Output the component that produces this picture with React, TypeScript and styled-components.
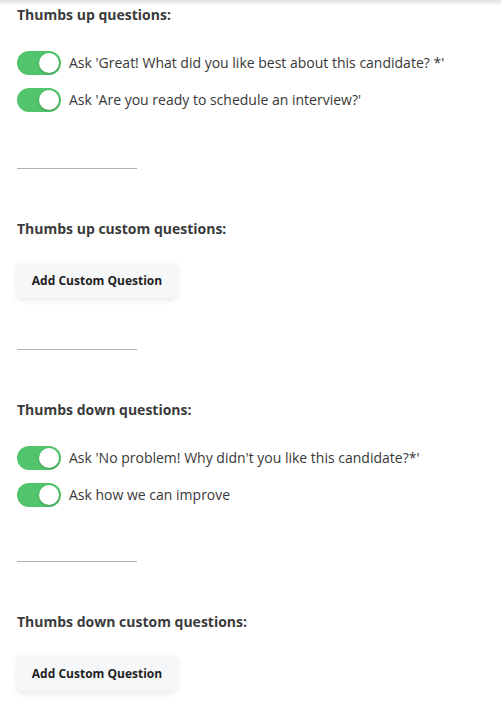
import styled, { createGlobalStyle } from 'styled-components';

const GlobalStyle = createGlobalStyle`
  html, body {
    margin: 0;
    padding: 0;
    background: #ffffff;
  }

  body {
    font-family: 'Open Sans', 'Liberation Sans', sans-serif;
    color: #333333;
  }
`;

const Page = styled.div`
  position: relative;
  min-height: 708px;
  padding: 0 17px;
  box-sizing: border-box;

  &::before {
    content: '';
    position: absolute;
    top: 0;
    left: 0;
    right: 0;
    height: 6px;
    background: linear-gradient(rgba(0, 0, 0, 0.12), rgba(0, 0, 0, 0));
  }
`;

const Section = styled.section`
  display: flex;
  flex-direction: column;
`;

const Heading = styled.h3<{ $top: number }>`
  margin: ${(props) => props.$top}px 0 0;
  font-size: 14px;
  font-weight: 700;
  line-height: 20px;
  color: #3b3b3b;
`;

const ToggleList = styled.div`
  display: flex;
  flex-direction: column;
  gap: 13px;
  margin-top: 26px;
`;

const ToggleRow = styled.label`
  display: flex;
  align-items: center;
  gap: 8px;
  font-size: 14px;
  line-height: 24px;
  color: #383838;
  cursor: pointer;
`;

const Track = styled.span<{ $on: boolean }>`
  position: relative;
  width: 44px;
  height: 24px;
  border-radius: 12px;
  flex-shrink: 0;
  background: ${(props) => (props.$on ? '#52c46b' : '#cfd3d8')};
`;

const Knob = styled.span<{ $on: boolean }>`
  position: absolute;
  top: 2px;
  left: ${(props) => (props.$on ? '22px' : '2px')};
  width: 20px;
  height: 20px;
  border-radius: 50%;
  background: #ffffff;
  box-shadow: 0 1px 2px rgba(0, 0, 0, 0.25);
`;

const Divider = styled.hr<{ $top: number }>`
  width: 120px;
  margin: ${(props) => props.$top}px 0 0;
  border: none;
  border-top: 1px solid #b3b3b3;
`;

const AddButton = styled.button`
  align-self: flex-start;
  width: 160px;
  height: 35px;
  margin-top: 24px;
  border: none;
  border-radius: 5px;
  background: #f6f7f9;
  box-shadow: 0 2px 6px rgba(0, 0, 0, 0.1);
  font-family: 'Open Sans', 'Liberation Sans', sans-serif;
  font-size: 12px;
  font-weight: 700;
  color: #1f1f1f;
  cursor: pointer;
`;

function Toggle({ label }: { label: string }) {
  return (
    <ToggleRow>
      <Track $on>
        <Knob $on />
      </Track>
      {label}
    </ToggleRow>
  );
}

export default function App() {
  return (
    <>
      <GlobalStyle />
      <Page>
        <Section>
          <Heading $top={5}>Thumbs up questions:</Heading>
          <ToggleList>
            <Toggle label="Ask 'Great! What did you like best about this candidate? *'" />
            <Toggle label="Ask 'Are you ready to schedule an interview?'" />
          </ToggleList>
          <Divider $top={56} />
        </Section>

        <Section>
          <Heading $top={50}>Thumbs up custom questions:</Heading>
          <AddButton>Add Custom Question</AddButton>
          <Divider $top={51} />
        </Section>

        <Section>
          <Heading $top={50}>Thumbs down questions:</Heading>
          <ToggleList>
            <Toggle label="Ask 'No problem! Why didn't you like this candidate?*'" />
            <Toggle label="Ask how we can improve" />
          </ToggleList>
          <Divider $top={54} />
        </Section>

        <Section>
          <Heading $top={50}>Thumbs down custom questions:</Heading>
          <AddButton>Add Custom Question</AddButton>
        </Section>
      </Page>
    </>
  );
}
